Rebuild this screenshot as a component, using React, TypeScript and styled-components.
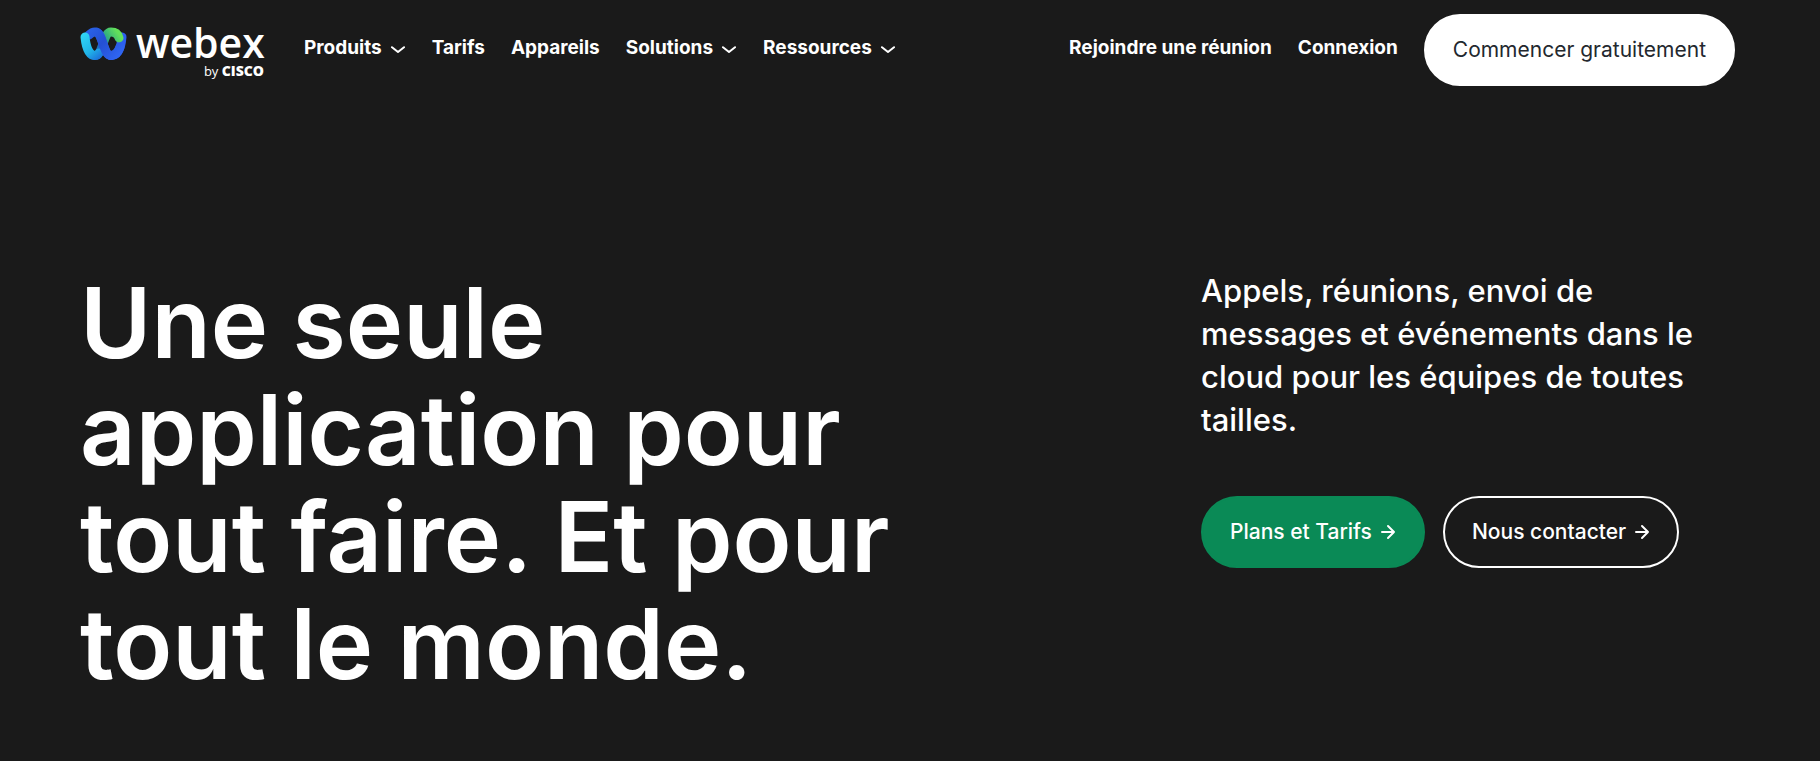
import React from "react";
import styled, { createGlobalStyle } from "styled-components";

const sans = `Inter, "Liberation Sans", sans-serif`;
const logoSans = `"Open Sans", "Noto Sans", sans-serif`;

const GlobalStyle = createGlobalStyle`
  *, *::before, *::after { box-sizing: border-box; }
  body {
    margin: 0;
    background: #1a1a1a;
    color: #fff;
    font-family: ${sans};
  }
  a { color: inherit; text-decoration: none; }
`;

const Page = styled.div`
  min-height: 100vh;
  padding: 0 80px;
`;

const Header = styled.header`
  display: flex;
  align-items: flex-start;
  padding: 14px 5px 0 0;
`;

const Logo = styled.a`
  display: grid;
  grid-template-columns: 47px 128px;
  column-gap: 9px;
  margin-right: 40px;
  font-family: ${logoSans};
`;

const LogoMark = styled.svg`
  width: 47px;
  height: 34px;
  margin-top: 13px;
`;

const Wordmark = styled.span`
  height: 48px;
  font-size: 41px;
  line-height: 56px;
  font-weight: 600;
`;

const Byline = styled.span`
  grid-column: 1 / -1;
  text-align: right;
  font-size: 13px;
  line-height: 18px;

  strong {
    font-size: 14px;
    font-weight: 800;
  }
`;

const Nav = styled.nav`
  display: flex;
  gap: 26px;
  height: 68px;
  align-items: center;
  font-size: 19px;
  line-height: 24px;
  font-weight: 700;
`;

const MainNav = styled(Nav)`
  flex: 1;
`;

const menuItem = `
  display: inline-flex;
  align-items: center;
  gap: 8px;
  padding: 0;
  border: 0;
  background: none;
  color: inherit;
  font: inherit;
  white-space: nowrap;
`;

const NavLink = styled.a`${menuItem}`;
const NavMenu = styled.button`${menuItem} cursor: pointer;`;

const Chevron = styled.svg`
  width: 16px;
  height: 8px;
  margin-top: 4px;
`;

const Pill = styled.a<{ $tone: "light" | "green" | "outline" }>`
  display: inline-flex;
  align-items: center;
  justify-content: center;
  gap: 8px;
  height: 72px;
  padding: 0 27px;
  border: 2px solid ${({ $tone }) => ($tone === "green" ? "#0a8a56" : "#fff")};
  border-radius: 36px;
  background: ${({ $tone }) => ({ light: "#fff", green: "#0a8a56", outline: "transparent" })[$tone]};
  color: ${({ $tone }) => ($tone === "light" ? "#23282e" : "#fff")};
  font-size: 21px;
  line-height: 24px;
  font-weight: ${({ $tone }) => ($tone === "light" ? 400 : 500)};
  white-space: nowrap;
`;

const HeaderAction = styled(Pill)`
  margin-left: 26px;
`;

const Arrow = styled.svg`
  width: 16px;
  height: 16px;
`;

const Hero = styled.main`
  display: flex;
  justify-content: space-between;
  padding: 183px 14px 40px 0;
`;

const Title = styled.h1`
  margin: 0;
  max-width: 840px;
  font-size: 97px;
  line-height: 107px;
  font-weight: 600;
`;

const Aside = styled.div`
  width: 525px;
  flex: none;
`;

const Lead = styled.p`
  margin: 0 0 55px;
  font-size: 31px;
  line-height: 43px;
  font-weight: 500;
`;

const Actions = styled.div`
  display: flex;
  gap: 18px;
`;

const DownIcon = () => (
  <Chevron viewBox="0 0 16 8" fill="none" stroke="currentColor" strokeWidth="2" strokeLinecap="round" strokeLinejoin="round" aria-hidden="true">
    <path d="M2 1.200 8 6l6-4.800" />
  </Chevron>
);

const ArrowIcon = () => (
  <Arrow viewBox="0 0 16 16" fill="none" stroke="currentColor" strokeWidth="2" strokeLinecap="round" strokeLinejoin="round" aria-hidden="true">
    <path d="M2 8h12M8 2l6 6-6 6" />
  </Arrow>
);

const WebexMark = () => (
  <LogoMark viewBox="0 0 47 34" fill="none" strokeWidth="9" strokeLinecap="round" aria-hidden="true">
    <defs>
      <linearGradient id="cyan" gradientUnits="userSpaceOnUse" x1="3" y1="8" x2="21" y2="30">
        <stop offset="0" stopColor="#2fd3f6" />
        <stop offset="0.600" stopColor="#20b4e8" />
        <stop offset="1" stopColor="#1c74dc" />
      </linearGradient>
      <linearGradient id="blue" gradientUnits="userSpaceOnUse" x1="8" y1="2" x2="42" y2="30">
        <stop offset="0" stopColor="#2a62e8" />
        <stop offset="0.450" stopColor="#2450d4" />
        <stop offset="1" stopColor="#3168f6" />
      </linearGradient>
      <linearGradient id="green" gradientUnits="userSpaceOnUse" x1="21" y1="18" x2="38" y2="6">
        <stop offset="0" stopColor="#1c6fc0" />
        <stop offset="0.500" stopColor="#35b37c" />
        <stop offset="1" stopColor="#62e05a" />
      </linearGradient>
    </defs>
    <path d="M31 28.500C37 28.500 41 22 42 10" stroke="#2c5fee" />
    <path d="M15 28.500C23 28.500 23 5 31 5 35 5 38 7 39 11" stroke="url(#green)" />
    <path d="M9 8C11 6 13 5 15 5 23 5 23 28.500 31 28.500 35 28.500 38 26 40 20" stroke="url(#blue)" />
    <path d="M5 10C6 20 9 28.500 15 28.500 17 28.500 18 28 19 26" stroke="url(#cyan)" />
    <path d="M17 5.300C23 8 23.500 28.500 31 28.500" stroke="url(#blue)" />
  </LogoMark>
);

export default function App() {
  return (
    <>
      <GlobalStyle />
      <Page>
        <Header>
          <Logo href="#">
            <WebexMark />
            <Wordmark>webex</Wordmark>
            <Byline>by <strong>CISCO</strong></Byline>
          </Logo>
          <MainNav>
            <NavMenu type="button">Produits <DownIcon /></NavMenu>
            <NavLink href="#">Tarifs</NavLink>
            <NavLink href="#">Appareils</NavLink>
            <NavMenu type="button">Solutions <DownIcon /></NavMenu>
            <NavMenu type="button">Ressources <DownIcon /></NavMenu>
          </MainNav>
          <Nav>
            <NavLink href="#">Rejoindre une réunion</NavLink>
            <NavLink href="#">Connexion</NavLink>
          </Nav>
          <HeaderAction href="#" $tone="light">Commencer gratuitement</HeaderAction>
        </Header>
        <Hero>
          <Title>Une seule application pour tout faire. Et pour tout le monde.</Title>
          <Aside>
            <Lead>Appels, réunions, envoi de messages et événements dans le cloud pour les équipes de toutes tailles.</Lead>
            <Actions>
              <Pill href="#" $tone="green">Plans et Tarifs <ArrowIcon /></Pill>
              <Pill href="#" $tone="outline">Nous contacter <ArrowIcon /></Pill>
            </Actions>
          </Aside>
        </Hero>
      </Page>
    </>
  );
}
